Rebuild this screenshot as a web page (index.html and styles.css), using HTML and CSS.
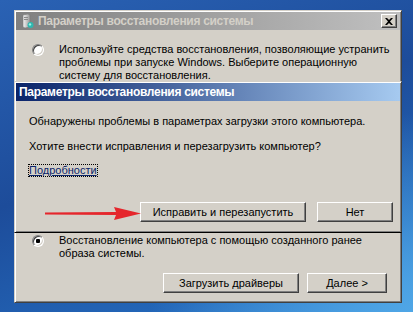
FILE: index.html
```html
<!DOCTYPE html>
<html lang="ru">
<head>
    <meta charset="UTF-8">
    <title>Параметры восстановления системы</title>
    <link rel="stylesheet" href="styles.css">
</head>
<body>
<div class="desktop">
    <div class="window">
        <div class="titlebar inactive">
            <!-- app icon -->
            <svg class="app-icon" width="13" height="15" viewBox="0 0 13 15">
                <defs>
                    <linearGradient id="tower" x1="0" y1="0" x2="1" y2="0">
                        <stop offset="0" stop-color="#f4f4f4"/>
                        <stop offset="1" stop-color="#9a9a9a"/>
                    </linearGradient>
                </defs>
                <path d="M2 1 L7 0 L9 1 L9 13 L4 14 L2 13 Z" fill="url(#tower)" stroke="#7a7a7a" stroke-width="0.6"/>
                <rect x="3" y="3" width="4" height="1" fill="#8a8a8a"/>
                <rect x="3" y="5" width="4" height="1" fill="#8a8a8a"/>
                <circle cx="9.5" cy="11" r="3" fill="#2fb8b0"/>
                <circle cx="9" cy="10.4" r="1.2" fill="#9ff0e8"/>
            </svg>
            <span class="title">Параметры восстановления системы</span>
            <span class="close">
                <svg width="8" height="7" viewBox="0 0 8 7">
                    <path d="M0 0 L2 0 L4 2 L6 0 L8 0 L5 3.5 L8 7 L6 7 L4 5 L2 7 L0 7 L3 3.5 Z" fill="#000"/>
                </svg>
            </span>
        </div>

        <div class="option option-top">
            <span class="radio"></span>
            <p>Используйте средства восстановления, позволяющие устранить<br>
            проблемы при запуске Windows. Выберите операционную<br>
            систему для восстановления.</p>
        </div>

        <div class="dialog">
            <div class="titlebar active">
                <span class="title">Параметры восстановления системы</span>
            </div>
            <div class="dialog-body">
                <p>Обнаружены проблемы в параметрах загрузки этого компьютера.</p>
                <p>Хотите внести исправления и перезагрузить компьютер?</p>
                <a class="details" href="#">Подробности</a>
                <div class="button-row dialog-buttons">
                    <button class="btn btn-repair">Исправить и перезапустить</button>
                    <button class="btn btn-no">Нет</button>
                </div>
            </div>
        </div>

        <div class="option option-bottom">
            <span class="radio checked"></span>
            <p>Восстановление компьютера с помощью созданного ранее<br>
            образа системы.</p>
        </div>

        <div class="button-row window-buttons">
            <button class="btn btn-drivers">Загрузить драйверы</button>
            <button class="btn btn-next">Далее &gt;</button>
        </div>
    </div>

    <!-- red pointer arrow -->
    <svg class="arrow" width="98" height="14" viewBox="0 0 98 14">
        <path d="M1 5.5 L72 5 L70 0 L97 6.5 L70 13 L72 8 L1 7.5 Z" fill="#e5262c"/>
    </svg>
</div>
</body>
</html>
```

FILE: styles.css
```css
body {
    margin: 0;
    font-family: "Liberation Sans", Arial, sans-serif;
    font-size: 11px;
    color: #000;
}
.desktop {
    position: relative;
    width: 413px;
    height: 312px;
    box-sizing: border-box;
    padding: 10px 0 0 14px;
    overflow: hidden;
    background:
        radial-gradient(ellipse at 100% 100%, #4fa6e6 0%, rgba(79, 166, 230, 0) 45%),
        linear-gradient(160deg, #2a62b4 0%, #1d4c9a 45%, #2366b8 80%, #3a8cd8 100%);
}
.window {
    width: 388px;
    height: 293px;
    box-sizing: border-box;
    padding: 1px;
    background-color: #d4d0c8;
    border: 1px solid;
    border-color: #d4d0c8 #404040 #404040 #d4d0c8;
    box-shadow: inset 1px 1px #fff, inset -1px -1px #808080;
    display: flex;
    flex-direction: column;
}

/* title bars */
.titlebar {
    height: 18px;
    display: flex;
    align-items: center;
    flex-shrink: 0;
}
.titlebar .title {
    font-weight: bold;
    font-size: 12px;
    letter-spacing: -0.3px;
    white-space: nowrap;
}
.titlebar.inactive {
    background: linear-gradient(to right, #808080, #c0c0c0);
    color: #d4d0c8;
}
.titlebar.active {
    background: linear-gradient(to right, #0a246a, #a6caf0);
    color: #fff;
    padding-left: 3px;
}
.app-icon {
    margin: 0 4px 0 5px;
}
.close {
    margin-left: auto;
    margin-right: 3px;
    width: 16px;
    height: 14px;
    box-sizing: border-box;
    background-color: #d4d0c8;
    border: 1px solid;
    border-color: #fff #404040 #404040 #fff;
    box-shadow: inset -1px -1px #808080;
    display: flex;
    align-items: center;
    justify-content: center;
}

/* radio options */
.option {
    display: flex;
    align-items: flex-start;
    padding-left: 16px;
    flex-shrink: 0;
}
.option p {
    margin: 0 0 0 15px;
    line-height: 13px;
    white-space: nowrap;
}
.option-top {
    height: 51px;
    box-sizing: border-box;
    padding-top: 13px;
    overflow: hidden;
}
.option-bottom {
    padding-top: 1px;
}
.radio {
    width: 12px;
    height: 12px;
    box-sizing: border-box;
    border-radius: 50%;
    background-color: #fff;
    border: 1px solid;
    border-color: #808080 #fff #fff #808080;
    box-shadow: inset 1px 1px #404040, inset -1px -1px #d4d0c8;
    margin-top: 1px;
    flex-shrink: 0;
}
.radio.checked {
    background: radial-gradient(circle, #000 0, #000 2px, #fff 2.5px);
}

/* confirmation dialog */
.dialog {
    height: 152px;
    margin: 0 -2px;
    box-sizing: border-box;
    padding: 1px;
    background-color: #d4d0c8;
    border: 1px solid;
    border-color: #d4d0c8 #404040 #000 #d4d0c8;
    box-shadow: inset 1px 1px #fff, inset -1px -1px #808080;
    display: flex;
    flex-direction: column;
    flex-shrink: 0;
}
.dialog-body {
    padding: 14px 7px 0 13px;
    display: flex;
    flex-direction: column;
    align-items: flex-start;
}
.dialog-body p {
    margin: 0 0 12px;
    line-height: 13px;
    white-space: nowrap;
}
.details {
    color: #0a246a;
    line-height: 11px;
    outline: 1px dotted #000;
    outline-offset: 0;
}

/* buttons */
.button-row {
    display: flex;
    justify-content: flex-end;
    align-self: stretch;
}
.dialog-buttons {
    margin-top: 26px;
    gap: 11px;
}
.window-buttons {
    margin-top: 13px;
    padding-right: 13px;
    gap: 8px;
}
.btn {
    height: 20px;
    padding: 0;
    font-family: inherit;
    font-size: 11px;
    color: #000;
    background-color: #d4d0c8;
    border: 1px solid;
    border-color: #fff #404040 #404040 #fff;
    box-shadow: inset -1px -1px #808080;
}
.btn-repair { width: 166px; }
.btn-no { width: 76px; }
.btn-drivers { width: 136px; }
.btn-next { width: 80px; }

.arrow {
    position: absolute;
    left: 44px;
    top: 207px;
}
```
